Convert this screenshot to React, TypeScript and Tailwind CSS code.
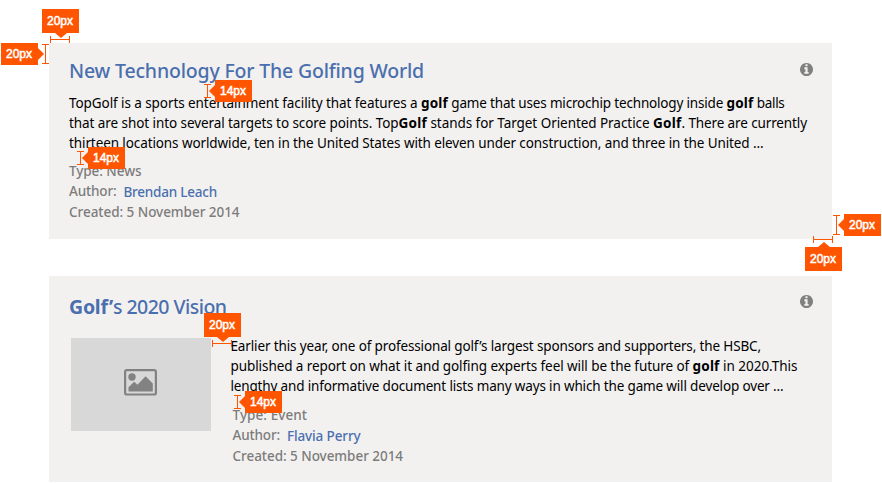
import { useLayoutEffect, useRef, useState } from "react";

type SegmentProps = { text: string; width: number; className?: string };

// A run of text whose tracking is adjusted so that it spans an exact width.
function Segment({ text, width, className = "" }: SegmentProps) {
  const ref = useRef<HTMLSpanElement>(null);
  const [tracking, setTracking] = useState(0);
  useLayoutEffect(() => {
    const el = ref.current;
    if (!el) return;
    el.style.letterSpacing = "0px";
    const natural = el.getBoundingClientRect().width;
    const value = (width - natural) / text.length;
    el.style.letterSpacing = `${value}px`;
    setTracking(value);
  }, [text, width]);
  return (
    <span ref={ref} className={`shrink-0 whitespace-pre ${className}`} style={{ letterSpacing: `${tracking}px` }}>
      {text}
    </span>
  );
}

type Run = [text: string, width: number, bold?: boolean];

function Line({ runs }: { runs: Run[] }) {
  return (
    <p className="flex h-5">
      {runs.map(([text, width, bold], i) => (
        <Segment key={i} text={text} width={width} className={bold ? "font-bold" : ""} />
      ))}
    </p>
  );
}

function InfoIcon() {
  return (
    <svg className="mt-[-1.5px] mr-[-0.5px] size-[13px] shrink-0" viewBox="0 0 1536 1536" fill="#808080">
      <path d="M1024 1248v-160q0-14-9-23t-23-9h-96V544q0-14-9-23t-23-9H544q-14 0-23 9t-9 23v160q0 14 9 23t23 9h96v320h-96q-14 0-23 9t-9 23v160q0 14 9 23t23 9h448q14 0 23-9t9-23zM896 352V192q0-14-9-23t-23-9H672q-14 0-23 9t-9 23v160q0 14 9 23t23 9h192q14 0 23-9t9-23zm640 416q0 209-103 385.500T1153.500 1433 768 1536t-385.500-103T103 1153.500 0 768t103-385.500T382.500 103 768 0t385.500 103T1433 382.500 1536 768z" />
    </svg>
  );
}

function PictureIcon() {
  return (
    <svg className="mr-[2px] mb-[5px] h-[27px] w-[33px]" viewBox="0 0 33 27">
      <rect x="1.1" y="1.1" width="30.8" height="24.4" rx="1.8" fill="none" stroke="#828282" strokeWidth="2.200" />
      <circle cx="8" cy="8" r="3.700" fill="#828282" />
      <path d="M4.500 22.500v-4.300l5.700-5.500 3.300 3.100 8.100-8.600 7.200 7.300v8z" fill="#828282" />
    </svg>
  );
}

type MetaProps = { type: Run; author: Run; created: Run };

function Meta({ type, author, created }: MetaProps) {
  return (
    <div className="text-[13.5px] leading-5 font-medium text-[#7c7c7c]">
      <div className="flex h-5"><Segment text={type[0]} width={type[1]} /></div>
      <div className="flex h-[21px] gap-[7px]">
        <Segment text="Author:" width={47.5} />
        <Segment text={author[0]} width={author[1]} className="pt-px text-[#4a6fae]" />
      </div>
      <div className="flex h-5"><Segment text={created[0]} width={created[1]} /></div>
    </div>
  );
}

type Side = "up" | "down" | "left" | "right";

// Orange measurement tag; the arrow points towards the measured gap.
function Tag({ text, side, className }: { text: string; side: Side; className: string }) {
  const tall = side === "up" || side === "down";
  const arrow = {
    up: "-top-[5px] left-[13px] h-[5px] w-3 [clip-path:polygon(50%_0,100%_100%,0_100%)]",
    down: "-bottom-[5px] left-[13px] h-[5px] w-3 [clip-path:polygon(0_0,100%_0,50%_100%)]",
    left: "-left-[6px] top-[5px] h-3 w-[6px] [clip-path:polygon(0_50%,100%_0,100%_100%)]",
    right: "-right-[6px] top-[5px] h-3 w-[6px] [clip-path:polygon(0_0,100%_50%,0_100%)]",
  }[side];
  return (
    <div className={`absolute flex w-[37px] items-center justify-center bg-[#ff5500] font-['Liberation_Sans',sans-serif] text-[12px] leading-none text-white [-webkit-text-stroke:0.5px_white] ${tall ? "h-6" : "h-[22px]"} ${className}`}>
      <span className="-translate-x-[0.5px]">{text}</span>
      <span className={`absolute bg-[#ff5500] ${arrow}`} />
    </div>
  );
}

function HorizontalGap({ className }: { className: string }) {
  return (
    <div className={`absolute flex h-[7px] items-center border-x border-[#ff5500] ${className}`}>
      <span className="h-px w-full bg-[#ff5500]" />
    </div>
  );
}

function VerticalGap({ className }: { className: string }) {
  return (
    <div className={`absolute flex w-[7px] justify-center border-y border-[#ff5500] ${className}`}>
      <span className="h-full w-px bg-[#ff5500]" />
    </div>
  );
}

export default function App() {
  return (
    <main className="relative h-[484px] w-[882px] overflow-hidden bg-white font-['Noto_Sans',sans-serif] text-black">
      <div className="flex flex-col gap-[37px] pt-[43px] pl-[49px]">
        <article className="h-[196px] w-[783px] bg-[#f3f1f0] px-5 pt-[14px]">
          <header className="flex items-start justify-between">
            <h2 className="flex h-7 text-[19.500px] leading-7 font-medium text-[#4a6fae]">
              <Segment text="New Technology For The Golfing World" width={355} />
            </h2>
            <div className="pt-[7px]"><InfoIcon /></div>
          </header>
          <div className="mt-2 text-[13.500px] leading-5">
            <Line runs={[["TopGolf is a sports entertainment facility that features a ", 352], ["golf", 27, true], [" game that uses microchip technology inside ", 278.5], ["golf", 27, true], [" balls", 31]]} />
            <Line runs={[["that are shot into several targets to score points. Top", 329.5], ["Golf", 28.5, true], [" stands for Target Oriented Practice ", 226], ["Golf", 28.5, true], [". There are currently", 125.5]]} />
            <Line runs={[["thirteen locations worldwide, ten in the United States with eleven under construction, and three in the United ...", 694.5]]} />
          </div>
          <div className="mt-2">
            <Meta type={["Type: News", 72.5]} author={["Brendan Leach", 93.5]} created={["Created: 5 November 2014", 170.5]} />
          </div>
        </article>

        <article className="h-[206px] w-[783px] bg-[#f3f1f0] px-5 pt-[17px]">
          <header className="flex items-start justify-between">
            <h2 className="flex h-7 text-[19.500px] leading-7 font-medium text-[#4a6fae]">
              <Segment text="Golf’" width={44} className="font-bold" />
              <Segment text="s 2020 Vision" width={113.5} />
            </h2>
            <div className="pt-[3px]"><InfoIcon /></div>
          </header>
          <div className="mt-[15px] flex">
            <div className="mt-[2px] ml-[2px] flex h-[93px] w-[140px] shrink-0 items-center justify-center bg-[#d8d8d8]">
              <PictureIcon />
            </div>
            <div className="ml-[19.500px]">
              <div className="text-[13.500px] leading-5">
                <Line runs={[["Earlier this year, one of professional golf’s largest sponsors and supporters, the HSBC,", 530.5]]} />
                <Line runs={[["published a report on what it and golfing experts feel will be the future of ", 462], ["golf", 27, true], [" in 2020.This", 78]]} />
                <Line runs={[["lengthy and informative document lists many ways in which the game will develop over ...", 553]]} />
              </div>
              <div className="mt-[9px] ml-[2px]">
                <Meta type={["Type: Event", 74.5]} author={["Flavia Perry", 73.5]} created={["Created: 5 November 2014", 170.5]} />
              </div>
            </div>
          </div>
        </article>
      </div>

      <HorizontalGap className="top-9 left-[50px] w-5" />
      <Tag text="20px" side="down" className="top-[9px] left-[42px]" />
      <VerticalGap className="top-11 left-[42px] h-5" />
      <Tag text="20px" side="right" className="top-[43px] left-px" />
      <VerticalGap className="top-[84px] left-[204px] h-[14px]" />
      <Tag text="14px" side="left" className="top-[80px] left-[215px]" />
      <VerticalGap className="top-[151px] left-[77px] h-[14px]" />
      <Tag text="14px" side="left" className="top-[147px] left-[88px]" />
      <VerticalGap className="top-[215px] left-[833px] h-5" />
      <Tag text="20px" side="left" className="top-[214px] left-[844px]" />
      <HorizontalGap className="top-[236px] left-[813px] w-5" />
      <Tag text="20px" side="up" className="top-[247px] left-[805px]" />
      <HorizontalGap className="top-[340px] left-[212px] w-5" />
      <Tag text="20px" side="down" className="top-[313px] left-[204px]" />
      <VerticalGap className="top-[395px] left-[234px] h-[14px]" />
      <Tag text="14px" side="left" className="top-[391px] left-[245px]" />
    </main>
  );
}
